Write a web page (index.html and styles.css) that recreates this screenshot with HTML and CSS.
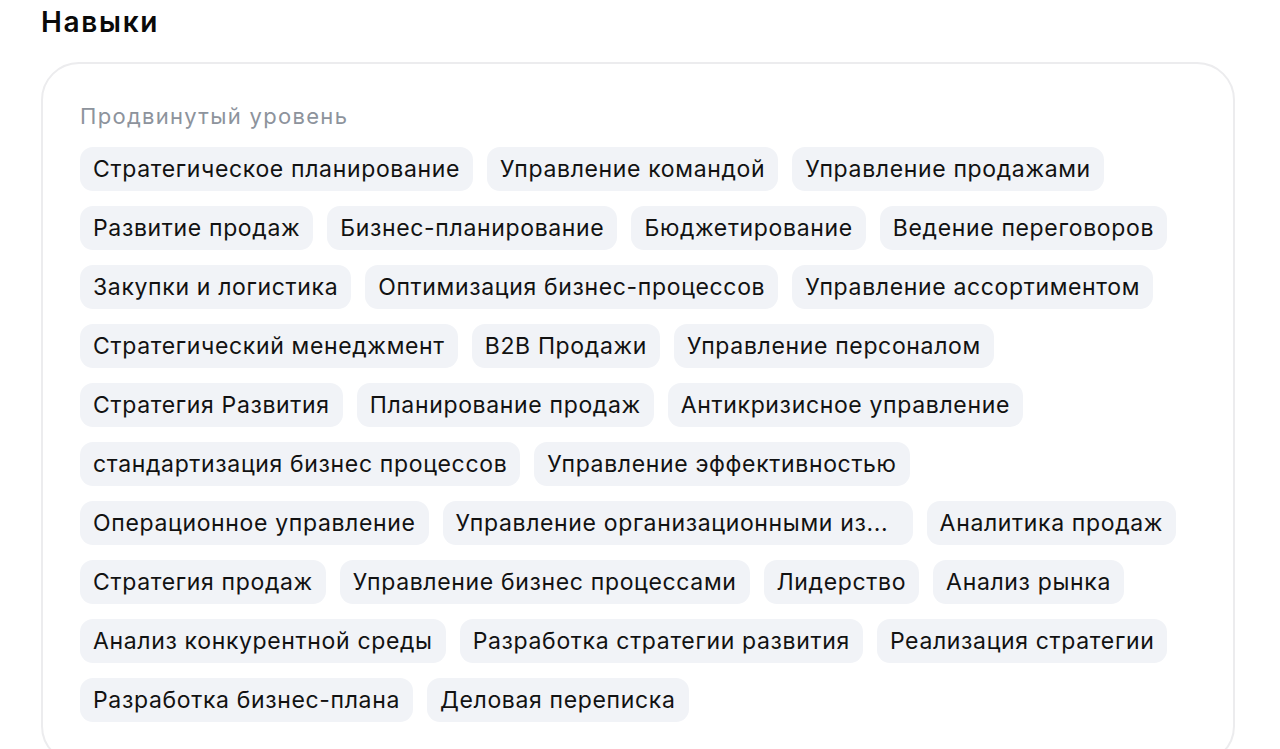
FILE: index.html
```html
<!DOCTYPE html>
<html lang="ru">
<head>
<meta charset="utf-8">
<title>Навыки</title>
<link rel="stylesheet" href="styles.css">
</head>
<body>
<section class="skills">
  <h2 class="skills-title">Навыки</h2>
  <div class="skills-card">
    <div class="skills-level">Продвинутый уровень</div>
    <ul class="chips">
      <li class="chip">Стратегическое планирование</li>
      <li class="chip">Управление командой</li>
      <li class="chip">Управление продажами</li>
      <li class="chip">Развитие продаж</li>
      <li class="chip">Бизнес-планирование</li>
      <li class="chip">Бюджетирование</li>
      <li class="chip">Ведение переговоров</li>
      <li class="chip">Закупки и логистика</li>
      <li class="chip">Оптимизация бизнес-процессов</li>
      <li class="chip">Управление ассортиментом</li>
      <li class="chip">Стратегический менеджмент</li>
      <li class="chip">B2B Продажи</li>
      <li class="chip">Управление персоналом</li>
      <li class="chip">Стратегия Развития</li>
      <li class="chip">Планирование продаж</li>
      <li class="chip">Антикризисное управление</li>
      <li class="chip">стандартизация бизнес процессов</li>
      <li class="chip">Управление эффективностью</li>
      <li class="chip">Операционное управление</li>
      <li class="chip chip--clamped" title="Управление организационными изменениями">Управление организационными из...</li>
      <li class="chip">Аналитика продаж</li>
      <li class="chip">Стратегия продаж</li>
      <li class="chip">Управление бизнес процессами</li>
      <li class="chip">Лидерство</li>
      <li class="chip">Анализ рынка</li>
      <li class="chip">Анализ конкурентной среды</li>
      <li class="chip">Разработка стратегии развития</li>
      <li class="chip">Реализация стратегии</li>
      <li class="chip">Разработка бизнес-плана</li>
      <li class="chip">Деловая переписка</li>
    </ul>
  </div>
</section>
</body>
</html>
```

FILE: styles.css
```css
html, body {
  margin: 0;
  padding: 0;
  background: #ffffff;
}

body {
  font-family: Inter, "Noto Sans", "DejaVu Sans", sans-serif;
  color: #111111;
}

.skills {
  padding: 0 45px 0 41px;
}

.skills-title {
  margin: 0;
  padding-top: 5px;
  font-size: 28px;
  line-height: 34px;
  font-weight: 600;
  letter-spacing: 1.7px;
  color: #0a0a0a;
}

.skills-card {
  margin-top: 23px;
  border: 2px solid #ececee;
  border-radius: 38px;
  padding: 37px 37px 40px;
  min-height: 700px;
  box-sizing: border-box;
}

.skills-level {
  font-size: 22px;
  line-height: 30px;
  letter-spacing: 1.3px;
  color: #8d939c;
}

.chips {
  list-style: none;
  margin: 16px 0 0;
  padding: 0;
  display: flex;
  flex-wrap: wrap;
  gap: 15px 14px;
}

.chip {
  box-sizing: border-box;
  height: 44px;
  line-height: 44px;
  padding: 0 13px;
  border-radius: 13px;
  background: #f1f3f7;
  font-size: 23px;
  letter-spacing: 0.65px;
  color: #121212;
  white-space: nowrap;
}

.chip--clamped {
  width: 470px;
}
```
